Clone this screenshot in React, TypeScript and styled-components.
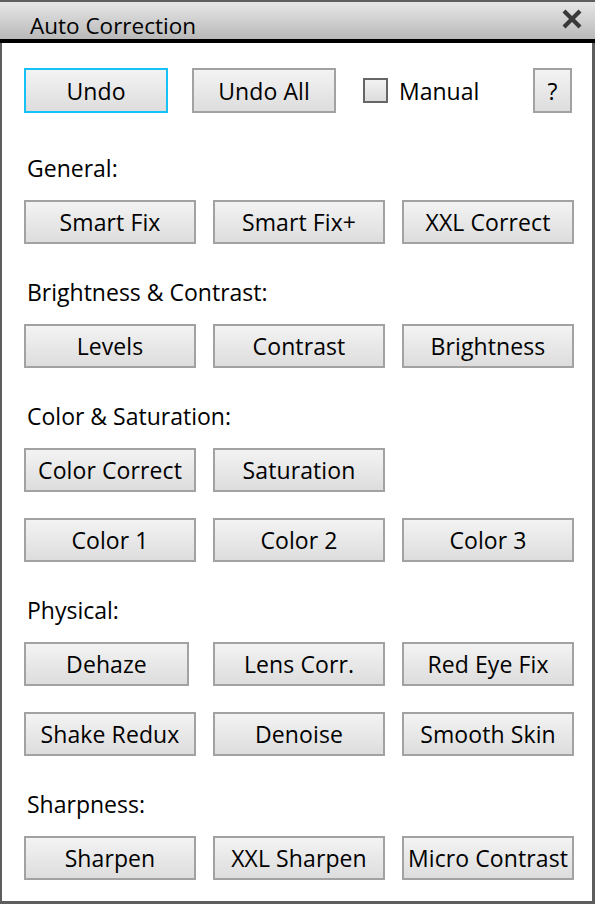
import React from 'react';
import styled, { createGlobalStyle } from 'styled-components';

const GlobalStyle = createGlobalStyle`
    html, body {
        margin: 0;
        padding: 0;
        background: #ffffff;
    }
    * {
        box-sizing: border-box;
    }
`;

const FONT = `"Open Sans", "Noto Sans", "DejaVu Sans", sans-serif`;

const Window = styled.div`
    width: 595px;
    height: 904px;
    background: #ffffff;
    border: 2px solid #5e5e5e;
    border-top: none;
    border-bottom-width: 3px;
    border-right-width: 3px;
    font-family: ${FONT};
    color: #000;
    display: flex;
    flex-direction: column;
`;

const TitleBar = styled.div`
    height: 43px;
    margin: 0 -3px 0 -2px;
    border-top: 2px solid #5e5e5e;
    border-bottom: 4px solid #000;
    background: linear-gradient(#e6e6e6, #b9b9b9);
    display: flex;
    align-items: center;
    justify-content: space-between;
    padding: 0 12px 0 30px;
`;

const Title = styled.span`
    font-size: 22.5px;
    line-height: 1;
    margin-top: 11px;
`;

const CloseIcon = styled.svg`
    width: 22px;
    height: 22px;
    margin-top: -4px;
`;

const Content = styled.div`
    padding: 25px 18px 0 22px;
    display: flex;
    flex-direction: column;
`;

const TopRow = styled.div`
    display: flex;
    align-items: center;
    height: 45px;
`;

interface ButtonProps {
    $w?: number;
    $focused?: boolean;
}

const Button = styled.button<ButtonProps>`
    width: ${p => (p.$w ? p.$w + 'px' : '172px')};
    margin-right: ${p => (p.$w && p.$w < 172 && p.$w > 150 ? 172 - p.$w + 'px' : '0')};
    flex-shrink: 0;
    height: 44px;
    padding: 0;
    border: 2px solid ${p => (p.$focused ? '#16c2f5' : '#a2a2a2')};
    background: linear-gradient(#f3f3f3, #dddddd);
    font-family: ${FONT};
    font-size: 23px;
    letter-spacing: 0.1px;
    color: #000;
    white-space: nowrap;
    cursor: pointer;
`;

const TopButton = styled(Button)`
    height: 45px;
    margin-right: 0;
`;

const CheckLabel = styled.label`
    display: flex;
    align-items: center;
    gap: 11px;
    margin-left: 27px;
    font-size: 23px;
    flex: 1;
`;

const CheckBox = styled.span`
    width: 25px;
    height: 25px;
    border: 2px solid #666;
    background: linear-gradient(#f3f3f3, #dcdcdc);
`;

const Section = styled.div<{ $first?: boolean }>`
    margin-top: ${p => (p.$first ? '40px' : '33px')};
    display: flex;
    flex-direction: column;
`;

const Label = styled.div`
    height: 30px;
    line-height: 30px;
    font-size: 23px;
    padding-left: 3px;
    margin-bottom: 17px;
`;

const Row = styled.div`
    display: flex;
    gap: 17px;
    & + & {
        margin-top: 26px;
    }
`;

const Spacer = styled.div<{ $w: number }>`
    width: ${p => p.$w}px;
    flex-shrink: 0;
`;

type Btn = string | { t: string; w: number };

const sections: { title: string; rows: Btn[][] }[] = [
    { title: 'General:', rows: [['Smart Fix', 'Smart Fix+', 'XXL Correct']] },
    { title: 'Brightness & Contrast:', rows: [['Levels', 'Contrast', 'Brightness']] },
    {
        title: 'Color & Saturation:',
        rows: [
            ['Color Correct', 'Saturation'],
            ['Color 1', 'Color 2', 'Color 3'],
        ],
    },
    {
        title: 'Physical:',
        rows: [
            [{ t: 'Dehaze', w: 165 }, 'Lens Corr.', 'Red Eye Fix'],
            ['Shake Redux', 'Denoise', 'Smooth Skin'],
        ],
    },
    { title: 'Sharpness:', rows: [['Sharpen', 'XXL Sharpen', 'Micro Contrast']] },
];

const ButtonRow: React.FC<{ items: Btn[] }> = ({ items }) => (
    <Row>
        {items.map(b =>
            typeof b === 'string' ? (
                <Button key={b}>{b}</Button>
            ) : (
                <Button key={b.t} $w={b.w}>{b.t}</Button>
            )
        )}
    </Row>
);

export default function App() {
    return (
        <>
            <GlobalStyle />
            <Window>
                <TitleBar>
                    <Title>Auto Correction</Title>
                    <CloseIcon viewBox="0 0 22 22">
                        <path d="M3 3 L19 19 M19 3 L3 19" stroke="#383838" strokeWidth="4.2" />
                    </CloseIcon>
                </TitleBar>
                <Content>
                    <TopRow>
                        <TopButton $w={144} $focused>Undo</TopButton>
                        <Spacer $w={24} />
                        <TopButton $w={144}>Undo All</TopButton>
                        <CheckLabel>
                            <CheckBox />
                            Manual
                        </CheckLabel>
                        <TopButton $w={39}>?</TopButton>
                        <Spacer $w={2} />
                    </TopRow>
                    {sections.map((s, si) => (
                        <Section key={s.title} $first={si === 0}>
                            <Label>{s.title}</Label>
                            {s.rows.map((r, i) => (
                                <ButtonRow key={i} items={r} />
                            ))}
                        </Section>
                    ))}
                </Content>
            </Window>
        </>
    );
}
